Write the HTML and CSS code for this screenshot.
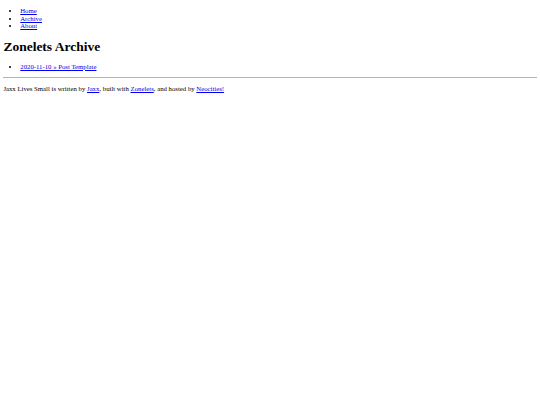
FILE: index.html
```html
<!DOCTYPE html>
<html>
<head>
<meta charset="utf-8">
<link rel="stylesheet" href="styles.css">
</head>
<body>
<ul class="nav">
<li><a href="#">Home</a></li>
<li><a href="#">Archive</a></li>
<li><a href="#">About</a></li>
</ul>
<h1 class="title">Zonelets Archive</h1>
<ul class="posts">
<li><a href="#">2020-11-10 » Post Template</a></li>
</ul>
<hr class="rule">
<p class="footer">Jaxx Lives Small is written by <a href="#">Jaxx</a>, built with <a href="#">Zonelets</a>, and hosted by <a href="#">Neocities!</a></p>
</body>
</html>
```
FILE: styles.css
```css
html { background: #fff; }
body {
  margin: 3.375px;
  font-family: "Liberation Serif", serif;
  font-size: 6.75px;
  color: #000;
}
a { color: #0000ee; }
.nav { margin: 4px 0 6.75px; padding-left: 2.5em; }
.nav li { line-height: 7.5px; }
.posts { margin: 6.75px 0 7.75px; padding-left: 2.5em; }
.title { font-size: 2em; margin: 8.8px 0 8px; }
.rule { margin: 3.375px 0; border: none; border-top: 1px solid #b4b4b4; height: 0; }
.footer { margin: 6.75px 0; }
```
